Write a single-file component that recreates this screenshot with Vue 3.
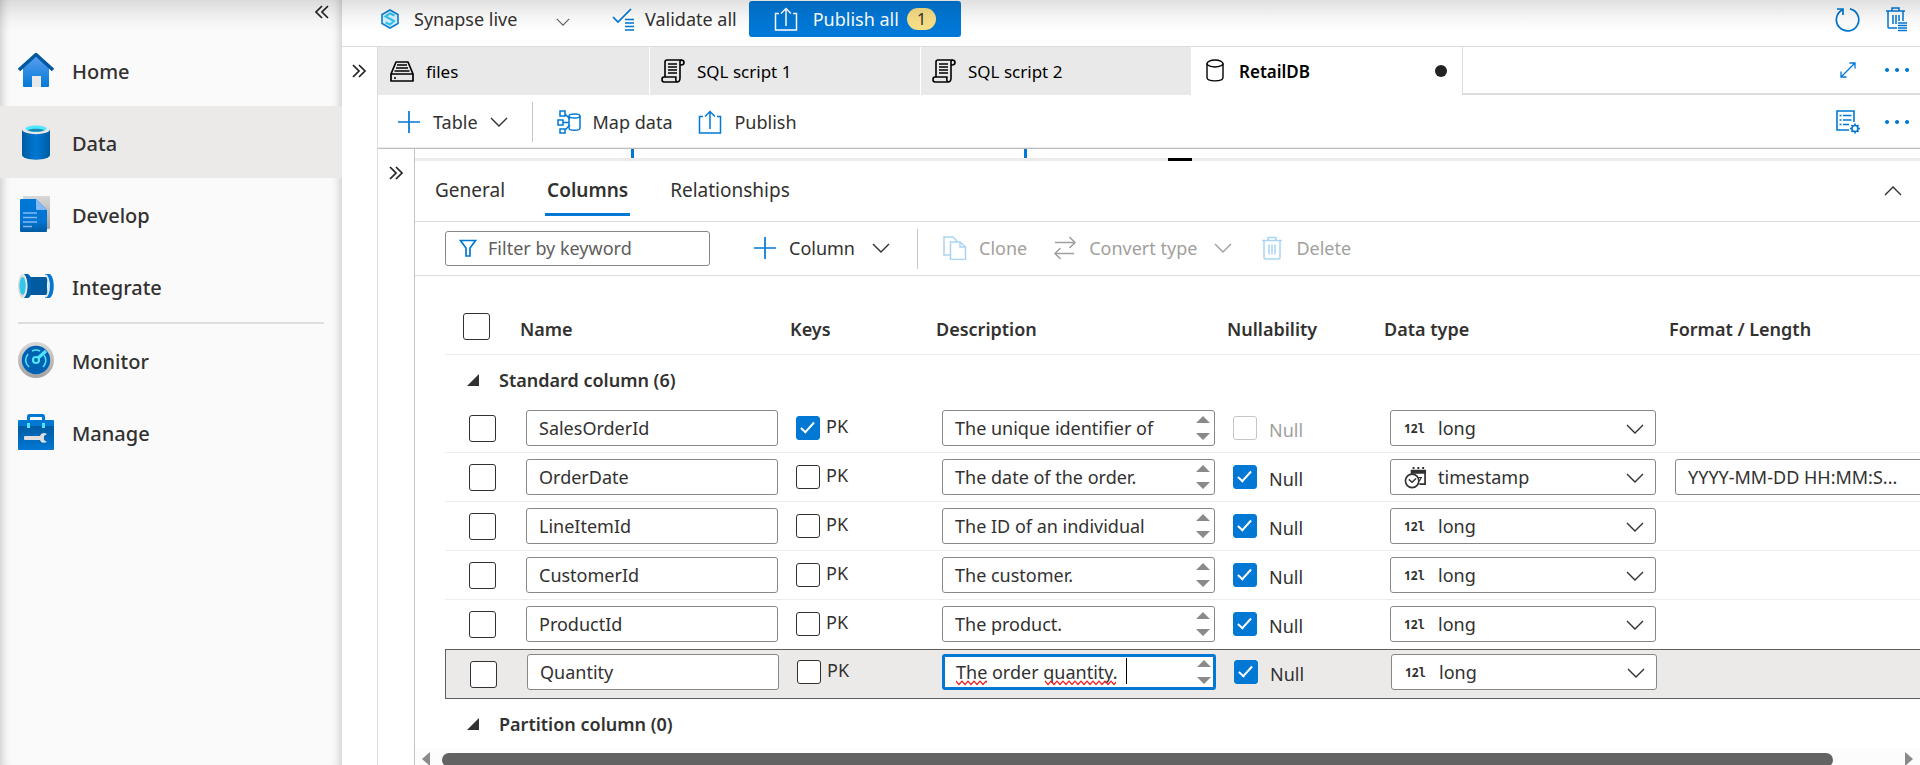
<script setup>
import { ref } from 'vue'

const nav = [
  { name: 'Home', icon: 'home' },
  { name: 'Data', icon: 'data', active: true },
  { name: 'Develop', icon: 'develop' },
  { name: 'Integrate', icon: 'integrate' },
  { name: 'Monitor', icon: 'monitor', divided: true },
  { name: 'Manage', icon: 'manage' },
]

const tabs = [
  { name: 'files', icon: 'drive' },
  { name: 'SQL script 1', icon: 'script' },
  { name: 'SQL script 2', icon: 'script' },
  { name: 'RetailDB', icon: 'db', active: true },
]

const rows = ref([
  { name: 'SalesOrderId', pk: true, desc: 'The unique identifier of', nullable: false, locked: true, type: 'long' },
  { name: 'OrderDate', pk: false, desc: 'The date of the order.', nullable: true, type: 'timestamp', format: 'YYYY-MM-DD HH:MM:S...' },
  { name: 'LineItemId', pk: false, desc: 'The ID of an individual', nullable: true, type: 'long' },
  { name: 'CustomerId', pk: false, desc: 'The customer.', nullable: true, type: 'long' },
  { name: 'ProductId', pk: false, desc: 'The product.', nullable: true, type: 'long' },
  { name: 'Quantity', pk: false, desc: 'The order quantity.', nullable: true, type: 'long', selected: true },
])
const filter = ref('')
</script>

<template>
  <div class="app">
    <svg class="defs" aria-hidden="true">
      <defs>
        <linearGradient id="gHome" x1="0" y1="0" x2="0" y2="1"><stop offset="0" stop-color="#5ea0ef" /><stop offset="1" stop-color="#0078d7" /></linearGradient>
        <linearGradient id="gCyl" x1="0" y1="0" x2="1" y2="0"><stop offset="0" stop-color="#005ba1" /><stop offset=".5" stop-color="#0078d4" /><stop offset="1" stop-color="#005ba1" /></linearGradient>
        <linearGradient id="gPage" x1="0" y1="0" x2="0" y2="1"><stop offset="0" stop-color="#0078d7" /><stop offset=".7" stop-color="#0074d0" /><stop offset="1" stop-color="#005ba1" /></linearGradient>
        <linearGradient id="gGrey" x1="0" y1="0" x2="0" y2="1"><stop offset="0" stop-color="#d8d8d8" /><stop offset="1" stop-color="#a3a3a3" /></linearGradient>
        <linearGradient id="gCase" x1="0" y1="0" x2="0" y2="1"><stop offset="0" stop-color="#005ba1" /><stop offset="1" stop-color="#0078d4" /></linearGradient>
        <pattern id="zigzag" width="6" height="6" patternUnits="userSpaceOnUse"><path d="M-1 0 3 4.500 7 0" fill="none" stroke="#f01818" stroke-width="1.300" /></pattern>
      </defs>
      <symbol id="home" viewBox="0 0 36 36">
        <path d="M5 15 18 3l13 12v19a1 1 0 0 1-1 1H6a1 1 0 0 1-1-1z" fill="url(#gHome)" />
        <path d="M14 24h9v11h-9z" fill="#e8e8e8" />
        <path d="M1 18 18 2.500l17 15.500" fill="none" stroke="#0059a0" stroke-width="3.400" stroke-linejoin="round" />
      </symbol>
      <symbol id="data" viewBox="0 0 36 36">
        <path d="M4 5v26c0 2.600 6.300 4.700 14 4.700s14-2.100 14-4.700V5z" fill="url(#gCyl)" />
        <ellipse cx="18" cy="5.300" rx="14" ry="4.900" fill="#e8e8e8" />
        <ellipse cx="18" cy="4.600" rx="10.600" ry="3.100" fill="#50e6ff" />
        <path d="M9.500 6.300c4-2 13-2 17 0-4 2-13 2-17 0z" fill="#198ab3" />
      </symbol>
      <symbol id="develop" viewBox="0 0 36 36">
        <rect x="5" width="27" height="33" rx="1" fill="url(#gGrey)" />
        <path d="M2 4a1 1 0 0 1 1-1h15l11 11v21a1 1 0 0 1-1 1H3a1 1 0 0 1-1-1z" fill="url(#gPage)" />
        <path d="M18 3l11 11H19a1 1 0 0 1-1-1z" fill="#83b9f9" />
        <path d="M5 17h14M5 21.500h14M5 26h14M5 30.500h9" stroke="#83b9f9" stroke-width="1.300" />
      </symbol>
      <symbol id="integrate" viewBox="0 0 36 36">
        <path d="M11 9h18v18H11z" fill="#005ba1" />
        <path d="M5 6h5c2 1 2.500 3 3 4v16c-.500 2-1.500 3.500-3 4H5z" fill="#0062ad" />
        <ellipse cx="4.600" cy="18" rx="4.600" ry="12" fill="#dcdcdc" />
        <ellipse cx="4.600" cy="18" rx="3.200" ry="9" fill="#32c8ea" />
        <path d="M5 6c5 5 5 19 0 24" fill="none" stroke="#e8e8e8" stroke-width="1.500" />
        <path d="M27 6h5c5 4 5 20 0 24h-5c4-5 4-19 0-24z" fill="#0078d4" />
        <path d="M28 7c4 5 4 17 0 22" fill="none" stroke="#e8e8e8" stroke-width="1.800" />
      </symbol>
      <symbol id="monitor" viewBox="0 0 36 36">
        <circle cx="18" cy="18" r="18" fill="url(#gGrey)" />
        <circle cx="18" cy="18" r="14.200" fill="#0062b0" />
        <g fill="none" stroke="#50e6ff" stroke-width="1.500">
          <path d="M11 25c-4-4-4-9-1-13M14 9c3-1.500 6-1 8 0M26 13c3 4 2 9-1 12" />
          <circle cx="18" cy="18" r="3" stroke-width="2.200" /><path d="M20 16 28 9" stroke-width="3" />
        </g>
      </symbol>
      <symbol id="manage" viewBox="0 0 36 36">
        <path d="M10.500 8V2.500A1 1 0 0 1 11.500 1.500h13a1 1 0 0 1 1 1V8" fill="none" stroke="#0078d4" stroke-width="3" />
        <path d="M0 12h36v23a1 1 0 0 1-1 1H1a1 1 0 0 1-1-1z" fill="url(#gCase)" />
        <path d="M0 7a1 1 0 0 1 1-1h34a1 1 0 0 1 1 1v5H0z" fill="#0078d4" />
        <path d="M9 9h3v5H9zM24 9h3v5h-3z" fill="#50e6ff" />
        <path d="M7 22h15c1-3 4-4 7-2l-3 2v4l3 2c-3 1.500-6 1-7-2H7a1 1 0 0 1-1-1v-2a1 1 0 0 1 1-1z" fill="#dedede" />
      </symbol>
      <symbol id="chevrons" viewBox="0 0 16 14"><path d="M2 1l6 6-6 6M8 1l6 6-6 6" fill="none" stroke="currentColor" stroke-width="1.700" /></symbol>
      <symbol id="down" viewBox="0 0 18 10"><path d="M1 1l8 8 8-8" fill="none" stroke="currentColor" stroke-width="1.400" /></symbol>
      <symbol id="plus" viewBox="0 0 24 24"><path d="M12 1v22M1 12h22" fill="none" stroke="currentColor" stroke-width="1.700" /></symbol>
      <symbol id="upload" viewBox="0 0 24 24"><path d="M5 6.500H1.500V23h21V6.500H19M12 19V1.500M7 6.500l5-5 5 5" fill="none" stroke="currentColor" stroke-width="1.500" /></symbol>
      <symbol id="drive" viewBox="0 0 24 24">
        <path d="M1 15 6 3h12l5 12v7H1zM1 15h22M7 6h10M6 9h12M4.500 12h15M4 19h2" fill="none" stroke="currentColor" stroke-width="1.700" stroke-linejoin="round" />
      </symbol>
      <symbol id="script" viewBox="0 0 24 24">
        <path d="M4 18V3q0-2 2-2h14q3 0 3 2.500T20 6h-1v13q0 4-3 4H3q-2 0-2-2.500T3 18h12q-1 5 2 5M19 6V3q0-2 2-2M7 5h9M7 8h9M7 11h9M7 14h9" fill="none" stroke="currentColor" stroke-width="1.600" stroke-linejoin="round" />
      </symbol>
      <symbol id="db" viewBox="0 0 24 24">
        <ellipse cx="12" cy="4.500" rx="8" ry="3.500" fill="none" stroke="currentColor" stroke-width="1.400" />
        <path d="M4 4.500v14c0 4.500 16 4.500 16 0v-14" fill="none" stroke="currentColor" stroke-width="1.400" />
      </symbol>
      <symbol id="trash" viewBox="0 0 24 24"><path d="M2 4.500h20M8 4V1.500h8V4M4 5v16.500q0 1.500 1.500 1.500h13q1.500 0 1.500-1.500V5M9 8.500v10M12 8.500v10M15 8.500v10" fill="none" stroke="currentColor" stroke-width="1.500" /></symbol>
      <symbol id="clock" viewBox="0 0 24 24">
        <path d="M8 5h14v14h-6" fill="none" stroke="currentColor" stroke-width="1.800" /><path d="M7 4h16v4H7zM9 1h2v2H9zM14 1h2v2h-2zM19 1h2v2h-2z" fill="currentColor" /><path d="M15 12h3l-2 4" fill="none" stroke="currentColor" stroke-width="1.200" />
        <circle cx="8.500" cy="15.500" r="7" fill="#fff" stroke="currentColor" stroke-width="1.700" /><path d="M5 14l3.500 3 4-4" fill="none" stroke="currentColor" stroke-width="1.500" />
      </symbol>
      <symbol id="dots" viewBox="0 0 26 6"><path d="M3 1a2 2 0 1 0 .1 0zM13 1a2 2 0 1 0 .1 0zM23 1a2 2 0 1 0 .1 0z" fill="currentColor" /></symbol>
    </svg>

    <aside class="sidebar">
      <button class="collapse" aria-label="Collapse menu"><svg class="dbl flip"><use href="#chevrons" /></svg></button>
      <nav>
        <a v-for="n in nav" :key="n.name" href="#" class="nav" :class="{ active: n.active, divided: n.divided }">
          <svg class="i36"><use :href="'#' + n.icon" /></svg><span>{{ n.name }}</span>
        </a>
      </nav>
    </aside>

    <main class="main">
      <header class="topbar">
        <button class="mode">
          <svg class="syn" viewBox="0 0 18 20"><path d="M9 1l8 4.500v9L9 19l-8-4.500v-9z" fill="#d9f2fc" stroke="#0f7fd0" stroke-width="1.600" /><path d="M13.500 6.500 9 4.500 4.500 7.500 13 12 9 15.500 4.500 13.500" fill="none" stroke="#2fc4ee" stroke-width="2" /></svg>
          <span>Synapse live</span>
          <svg class="chev small"><use href="#down" /></svg>
        </button>
        <button class="validate">
          <svg class="i24 blue" viewBox="0 0 24 24"><path d="M1 10l5 5L19 2" fill="none" stroke="currentColor" stroke-width="1.700" /><path d="M13 12.500h9M13 16h9M13 19.500h9M13 23h9" stroke="currentColor" stroke-width="1.700" /></svg>
          Validate all
        </button>
        <button class="publish"><svg class="i24"><use href="#upload" /></svg><span>Publish all</span><b class="badge">1</b></button>
        <div class="end">
          <button class="ico" aria-label="Refresh"><svg class="i26" viewBox="0 0 26 26"><path d="M8 4A11.200 11.200 0 1 0 16 2.800M3 3h6v6" fill="none" stroke="currentColor" stroke-width="1.700" /></svg></button>
          <button class="ico" aria-label="Discard all"><svg class="i26" viewBox="0 0 26 26"><path d="M2 5h19M8 5V2h7v3M4 5v16q0 1 1 1h8M19 5v10M9 9v9M12 9v9M15 9v6M14 17h9M14 19.500h9M14 22h9M14 24.500h9" fill="none" stroke="currentColor" stroke-width="1.500" /></svg></button>
        </div>
      </header>

      <div class="work">
        <div class="rail"><button aria-label="Expand resources"><svg class="dbl"><use href="#chevrons" /></svg></button></div>
        <div class="editor">
          <div class="tabs">
            <button v-for="t in tabs" :key="t.name" class="tab" :class="{ active: t.active }">
              <svg class="i24"><use :href="'#' + t.icon" /></svg><span>{{ t.name }}</span><i v-if="t.active" class="dirty"></i>
            </button>
            <div class="tabend">
              <button class="ico" aria-label="Full screen"><svg class="i16" viewBox="0 0 16 16"><path d="M1 15 15 1M9.500 1H15v5.500M1 9.500V15h5.500" fill="none" stroke="currentColor" stroke-width="1.300" /></svg></button>
              <button class="ico" aria-label="More tab actions"><svg class="dots"><use href="#dots" /></svg></button>
            </div>
          </div>

          <div class="tools">
            <button class="addtable"><svg class="i24 blue"><use href="#plus" /></svg>Table<svg class="chev"><use href="#down" /></svg></button>
            <span class="rule"></span>
            <button><svg class="i24 blue" viewBox="0 0 24 24"><path d="M3 1h5v5H3zM1 10h5v5H1zM3 19h5v4H3zM8 4l5 5M6 12.500h6M8 20l5-5" fill="none" stroke="currentColor" stroke-width="1.500" /><path d="M12 6v12c0 3 11 3 11 0V6" fill="none" stroke="currentColor" stroke-width="1.500" /><ellipse cx="17.500" cy="6" rx="5.500" ry="2" fill="#fff" stroke="currentColor" stroke-width="1.500" /></svg>Map data</button>
            <button class="pub2"><svg class="i24 blue"><use href="#upload" /></svg>Publish</button>
            <div class="end">
              <button class="ico" aria-label="Properties"><svg class="i24" viewBox="0 0 24 24"><path d="M13 20H1V1h17v11" fill="none" stroke="currentColor" stroke-width="1.600" /><path d="M3.500 5.500h2M7 5.500h8.500M3.500 10h2M7 10h8.500M3.500 14.500h2M7 14.500h6" stroke="currentColor" stroke-width="1.500" /><circle cx="19" cy="18.500" r="3" fill="none" stroke="currentColor" stroke-width="1.600" /><path d="M19 13.500v2M19 21.500v2M14 18.500h2M22 18.500h2M15.500 15l1.400 1.400M21.100 20.600l1.400 1.400M15.500 22l1.400-1.400M21.100 16.400l1.400-1.400" stroke="currentColor" stroke-width="1.700" /></svg></button>
              <button class="ico" aria-label="More actions"><svg class="dots"><use href="#dots" /></svg></button>
            </div>
          </div>

          <div class="below">
            <div class="rail inner"><button aria-label="Expand tables"><svg class="dbl"><use href="#chevrons" /></svg></button></div>
            <section class="panel">
              <div class="canvas"><i class="edge one"></i><i class="edge two"></i></div>
              <div class="splitter"><i></i></div>
              <div class="ptabs">
                <button>General</button><button class="on">Columns</button><button>Relationships</button>
                <button class="up" aria-label="Collapse panel"><svg class="chev"><use href="#down" /></svg></button>
              </div>
              <div class="cmds">
                <label class="filter">
                  <svg class="i18 blue" viewBox="0 0 18 18"><path d="M1.500 1.500h15L11 9v8H7V9z" fill="none" stroke="currentColor" stroke-width="1.700" /></svg>
                  <input v-model="filter" type="text" placeholder="Filter by keyword" aria-label="Filter by keyword" />
                </label>
                <button class="addcol"><svg class="i24 blue"><use href="#plus" /></svg>Column<svg class="chev"><use href="#down" /></svg></button>
                <span class="rule"></span>
                <button class="clone" disabled><svg class="i24 pale" viewBox="0 0 24 24"><path d="M7 19H1V1h9l4 4M7.500 6H17l5.500 5v12.500h-15zM17 6v5h5.500" fill="none" stroke="currentColor" stroke-width="1.500" /></svg>Clone</button>
                <button class="convert" disabled><svg class="i24" viewBox="0 0 24 24"><path d="M2 6.500h20M16.500 1l5.500 5.500-5.500 5.500M21 17.500H2M7.500 12 2 17.500 7.500 23" fill="none" stroke="currentColor" stroke-width="1.500" /></svg>Convert type<svg class="chev"><use href="#down" /></svg></button>
                <button class="del" disabled><svg class="i24 pale"><use href="#trash" /></svg>Delete</button>
              </div>

              <div class="grid">
                <table>
                  <colgroup><col class="c1" /><col class="c2" /><col class="c3" /><col class="c4" /><col class="c5" /><col class="c6" /><col class="c7" /></colgroup>
                  <thead>
                    <tr>
                      <th class="sel"><input type="checkbox" class="box big" aria-label="Select all" /></th>
                      <th>Name</th><th>Keys</th><th>Description</th><th>Nullability</th><th>Data type</th><th>Format / Length</th>
                    </tr>
                  </thead>
                  <tbody>
                    <tr class="group"><td colspan="7"><button><svg class="tri" viewBox="0 0 12 12"><path d="M12 0v12H0z" fill="currentColor" /></svg>Standard column (6)</button></td></tr>
                    <tr v-for="r in rows" :key="r.name" :class="{ selected: r.selected }">
                      <td class="sel"><input type="checkbox" class="box big" :aria-label="'Select ' + r.name" /></td>
                      <td><input v-model="r.name" class="field name" type="text" aria-label="Name" /></td>
                      <td><label class="opt pk"><input v-model="r.pk" type="checkbox" class="box" />PK</label></td>
                      <td>
                        <div class="desc" :class="{ focus: r.selected }">
                          <textarea v-model="r.desc" class="field" rows="1" spellcheck="false" aria-label="Description"></textarea>
                          <svg class="arrows" viewBox="0 0 14 24"><path d="M0 7 7 0l7 7zM0 17l7 7 7-7z" fill="#8a8a8a" /></svg>
                          <template v-if="r.selected">
                            <svg class="wave w1"><rect width="100%" height="6" fill="url(#zigzag)" /></svg>
                            <svg class="wave w2"><rect width="100%" height="6" fill="url(#zigzag)" /></svg>
                            <i class="caret"></i>
                          </template>
                        </div>
                      </td>
                      <td><label class="opt null" :class="{ off: r.locked }"><input v-model="r.nullable" type="checkbox" class="box" :disabled="r.locked" />Null</label></td>
                      <td>
                        <div class="type">
                          <select v-model="r.type" class="field" aria-label="Data type"><option>long</option><option>timestamp</option></select>
                          <svg v-if="r.type === 'timestamp'" class="ticon"><use href="#clock" /></svg>
                          <span v-else class="ticon num" aria-hidden="true">12<span>l</span></span>
                          <svg class="chev"><use href="#down" /></svg>
                        </div>
                      </td>
                      <td><input v-if="r.format" v-model="r.format" class="field fmt" type="text" aria-label="Format" /></td>
                    </tr>
                    <tr class="group"><td colspan="7"><button><svg class="tri" viewBox="0 0 12 12"><path d="M12 0v12H0z" fill="currentColor" /></svg>Partition column (0)</button></td></tr>
                  </tbody>
                </table>
              </div>
              <div class="hscroll">
                <svg viewBox="0 0 8 14"><path d="M8 0v14L0 7z" fill="#8a8a8a" /></svg>
                <i class="thumb"></i>
                <svg viewBox="0 0 8 14"><path d="M0 0v14l8-7z" fill="#8a8a8a" /></svg>
              </div>
            </section>
          </div>
        </div>
      </div>
    </main>
    <div class="shade"></div>
  </div>
</template>

<style>
html, body { background: #fff; overflow: hidden; }
</style>

<style scoped>
.app { position: relative; display: flex; height: 100vh; overflow: hidden; background: #fff; color: #323130; font: 18px/24px "Segoe UI", "Noto Sans", "Open Sans", sans-serif; }
.app *, .app *::before { box-sizing: border-box; }
.defs { position: absolute; width: 0; height: 0; }
button { display: flex; align-items: center; padding: 0; border: 0; background: none; color: inherit; font: inherit; white-space: nowrap; }
svg { flex: none; display: block; }
.i16 { width: 16px; height: 16px; } .i18 { width: 18px; height: 18px; } .i24 { width: 24px; height: 24px; }
.i26 { width: 26px; height: 26px; } .i36 { width: 36px; height: 36px; }
.dbl { width: 16px; height: 14px; } .flip { transform: scaleX(-1); }
.chev { width: 18px; height: 10px; } .chev.small { width: 14px; height: 8px; margin-top: 6px; color: #605e5c; }
.dots { width: 26px; height: 6px; }
.blue, .ico { color: #0078d4; }
.shade { position: absolute; inset: 0 0 auto; height: 32px; background: linear-gradient(rgba(0,0,0,.12), rgba(0,0,0,.03) 60%, transparent); pointer-events: none; }

.sidebar { flex: none; width: 342px; background: #fafafa; box-shadow: inset 10px 0 10px -8px rgba(0,0,0,.2), inset -10px 0 10px -8px rgba(0,0,0,.2); }
.collapse { margin: 5px 12px 15px auto; color: #222; }
.nav { display: flex; align-items: center; gap: 18px; height: 72px; padding-left: 18px; color: #323130; text-decoration: none; font-size: 20px; font-weight: 500; }
.nav span { padding-top: 4px; }
.nav.active { background: #ebeae9; }
.nav.divided { position: relative; margin-top: 2px; }
.nav.divided::before { content: ""; position: absolute; left: 18px; right: 18px; top: -2px; height: 2px; background: #dedede; }

.main { flex: 1; min-width: 0; display: flex; flex-direction: column; }
.topbar { display: flex; align-items: flex-start; height: 47px; padding: 1px 10px 0 39px; border-bottom: 1px solid #dcdcdc; }
.topbar button { height: 36px; }
.mode span { width: 142px; margin-left: 15px; text-align: left; }
.syn { width: 18px; height: 20px; }
.validate { margin-left: 42px; gap: 9px; }
.publish { padding: 0 25px; border-radius: 3px; background: #0078d7; color: #fff; margin-left: 12px; }
.publish span { margin: 0 8px 0 15px; }
.badge { padding: 0 10px; border-radius: 12px; background: #f9e087; color: #323130; font: 16px/22px "Segoe UI", "Noto Sans", sans-serif; }
.end, .tabend { margin-left: auto; display: flex; align-items: center; gap: 24px; }

.work { flex: 1; min-height: 0; display: flex; }
.rail { flex: none; width: 36px; padding: 17px 0 0 9px; border-right: 1px solid #dcdcdc; color: #222; }
.editor { flex: 1; min-width: 0; display: flex; flex-direction: column; }
.tabs { display: flex; height: 48px; padding-left: 1px; background: linear-gradient(to right, #e9e9e9 2px, #fff 2px); color: #000; font-size: 17px; }
.tab { flex: none; width: 271px; padding: 0 15px 0 11px; gap: 12px; background: #e9e9e9; border-right: 1px solid #fff; }
.tab span { padding-top: 2px; }
.tab.active { background: #fff; border-color: #dcdcdc; font-weight: 600; }
.dirty { margin-left: auto; width: 12px; height: 12px; border-radius: 6px; background: #222; }
.tabend { flex: 1; justify-content: flex-end; padding-right: 10px; gap: 28px; border-bottom: 2px solid #dcdcdc; }
.tools { display: flex; align-items: center; height: 54px; padding: 0 10px 0 19px; border-bottom: 1px solid #bdbdbd; box-shadow: inset 0 -1px #ececec; }
.tools button { gap: 12px; }
.tools .end { gap: 24px; }
.rule { width: 1px; height: 40px; background: #c8c6c4; }
.addtable { margin-right: 24px; }
.tools .rule + button { margin-left: 24px; }
.tools .pub2 { margin-left: 26px; }

.below { flex: 1; min-height: 0; display: flex; }
.rail.inner { width: 37px; padding-left: 10px; border-color: #c4c4c4; }
.panel { flex: 1; min-width: 0; display: flex; flex-direction: column; }
.canvas { position: relative; height: 9px; flex: none; }
.edge { position: absolute; top: 0; bottom: 0; width: 3px; background: #0078d4; }
.edge.one { left: 216px; box-shadow: -4px 0 8px rgba(0,0,0,.1); } .edge.two { left: 609px; box-shadow: 4px 0 8px rgba(0,0,0,.1); }
.splitter { height: 3px; flex: none; background: #ececec; }
.splitter i { display: block; width: 24px; height: 3px; margin-left: 50%; background: #000; }
.ptabs { display: flex; gap: 38px; height: 61px; padding: 0 18px 5px; border-bottom: 1px solid #dcdcdc; font-size: 19px; }
.ptabs button { padding: 8px 2px 3px; border-bottom: 3px solid transparent; }
.ptabs .on { font-weight: 600; border-color: #0078d4; }
.ptabs .up { margin-left: auto; padding: 7px 0 0; }
.up svg { transform: rotate(180deg); }
.cmds { display: flex; align-items: center; height: 54px; padding-left: 30px; border-bottom: 1px solid #dcdcdc; }
.cmds button { gap: 12px; padding-bottom: 2px; }
.filter { display: flex; align-items: center; width: 265px; height: 35px; padding: 0 0 1px 13px; gap: 11px; border: 1px solid #8a8886; border-radius: 3px; }
.filter input { flex: 1; min-width: 0; padding: 0; border: 0; outline: 0; background: none; font: inherit; }
.filter input::placeholder { color: #605e5c; opacity: 1; }
.addcol { margin: 0 27px 0 43px; }
.addcol .chev { margin-left: 5px; }
.cmds button:disabled { color: #a19f9d; }
.cmds .pale { color: #a9d3f2; }
.clone { margin-left: 25px; } .convert { margin-left: 26px; } .del { margin-left: 28px; }
.convert .chev { margin-left: 5px; }

.grid { flex: 1; min-height: 0; margin-left: 30px; overflow: hidden; }
table { width: 1760px; table-layout: fixed; border-collapse: separate; border-spacing: 0; }
.c1 { width: 69px; } .c2 { width: 270px; } .c3 { width: 146px; } .c4 { width: 291px; } .c5 { width: 157px; } .c6 { width: 285px; }
th { height: 79px; padding: 28px 0 0 6px; border-bottom: 1px solid #ededed; text-align: left; font-weight: 600; vertical-align: top; line-height: 50px; }
th.sel { padding: 37px 0 0 18px; line-height: 0; }
td { height: 49px; padding: 0 0 0 12px; border-bottom: 1px solid #ededed; vertical-align: middle; }
td.sel { padding-left: 24px; }
.group td { padding-left: 22px; border: 0; }
.group button { gap: 20px; font-weight: 600; }
.tri { width: 12px; height: 12px; }
tr:has(+ .selected) td { border-bottom-color: transparent; }
.selected td { height: 50px; padding: 0 0 4px 13px; background: #ebeae9; border: solid #605e5c; border-width: 1px 0; }
.selected td.sel { padding: 1px 0 0 24px; border-left-width: 1px; }
.box { appearance: none; flex: none; display: block; width: 24px; height: 24px; margin: 0; border: 1px solid #323130; border-radius: 3px; background: #fff; }
.box.big { width: 27px; height: 27px; }
.box:checked { position: relative; border-color: #0078d4; background: #0078d4; }
.box:checked::before { content: ""; position: absolute; left: 7px; top: 2px; width: 7px; height: 14px; border: solid #fff; border-width: 0 2px 2px 0; transform: rotate(42deg); }
.box:disabled { border-color: #c8c6c4; }
.opt { display: flex; line-height: 20px; }
.pk { gap: 6px; } .null { gap: 12px; align-items: flex-end; }
.null.off { color: #a19f9d; }
.field { display: block; width: 100%; height: 36px; margin: 0; padding: 5px 12px; border: 1px solid #8a8886; border-radius: 3px; background: #fff; color: #323130; font: inherit; line-height: 24px; outline: 0; }
.name { width: 252px; }
.desc { position: relative; width: 273px; }
.desc textarea { resize: none; overflow: hidden; white-space: nowrap; }
.desc.focus { width: 274px; margin-left: -1px; }
.focus textarea { padding: 3px 11px; border: 3px solid #0078d4; }
.arrows { position: absolute; right: 5px; top: 6px; width: 14px; height: 24px; }
.wave { position: absolute; top: 26px; height: 6px; }
.w1 { left: 14px; width: 31px; } .w2 { left: 103px; width: 71px; }
.caret { position: absolute; left: 184px; top: 4px; width: 1px; height: 26px; background: #000; }
.type { position: relative; width: 266px; }
.type select { appearance: none; padding-left: 47px; }
.type .chev { position: absolute; right: 12px; top: 14px; color: #323130; pointer-events: none; }
.ticon { position: absolute; left: 14px; top: 7px; width: 23px; height: 23px; pointer-events: none; }
.num { font: bold 12px/23px "Noto Sans", sans-serif; white-space: nowrap; }
.num span { font-family: "DejaVu Sans Mono", monospace; }
.fmt { width: 270px; }
.hscroll { flex: none; display: flex; align-items: flex-start; gap: 12px; height: 17px; padding: 4px 7px 0; background: #fcfcfc; }
.hscroll svg { width: 8px; height: 14px; }
.thumb { flex: 1; height: 14px; margin: 1px 60px 0 0; border-radius: 7px; background: #636363; }
</style>
